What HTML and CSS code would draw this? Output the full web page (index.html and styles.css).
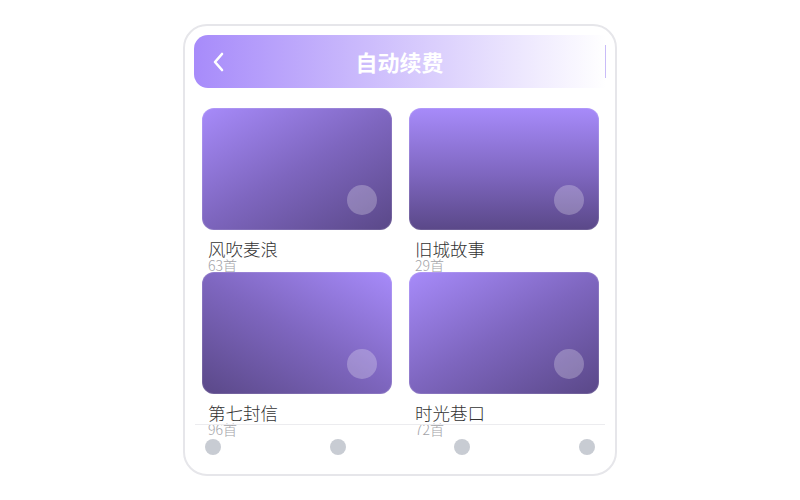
FILE: index.html
```html
<!DOCTYPE html>
<html lang="zh-CN">
<head>
    <meta charset="UTF-8">
    <meta name="viewport" content="width=device-width, initial-scale=1.0">
    <title>自动续费</title>
    <link rel="stylesheet" href="styles.css">
</head>
<body>
    <div class="phone">
        <div class="header">
            <span class="back">
                <svg width="14" height="20" viewBox="0 0 14 20"><path d="M10 2 L3 10 L10 18" fill="none" stroke="#fff" stroke-width="2.6" stroke-linecap="round" stroke-linejoin="round"/></svg>
            </span>
            <h1 class="title">自动续费</h1>
            <span class="edge"></span>
        </div>

        <div class="grid" id="albumGrid"></div>

        <div class="tabbar">
            <span class="dot"></span>
            <span class="dot"></span>
            <span class="dot"></span>
            <span class="dot"></span>
        </div>
    </div>

    <script>
        const albums = [
            { name: "风吹麦浪", count: 63, style: "g1" },
            { name: "旧城故事", count: 29, style: "g2" },
            { name: "第七封信", count: 96, style: "g3" },
            { name: "时光巷口", count: 72, style: "g1" }
        ];

        const grid = document.getElementById("albumGrid");
        albums.forEach(album => {
            const item = document.createElement("div");
            item.className = "album";
            item.innerHTML = `
                <div class="cover ${album.style}"><span class="play"></span></div>
                <div class="name">${album.name}</div>
                <div class="count">${album.count}首</div>
            `;
            grid.appendChild(item);
        });
    </script>
</body>
</html>
```

FILE: styles.css
```css
body {
    margin: 0;
    background: #fff;
    font-family: "Noto Sans CJK SC", "Noto Sans", sans-serif;
}
.phone {
    position: relative;
    width: 430px;
    height: 448px;
    margin: 24px auto 0;
    border: 2px solid #e6e6ea;
    border-radius: 24px;
    overflow: hidden;
    background: #fff;
}
.header {
    display: flex;
    align-items: center;
    height: 53px;
    margin: 9px 9px 0 9px;
    border-radius: 14px 0 0 14px;
    background: linear-gradient(90deg, #a78bfa 0%, #ffffff 100%);
}
.back {
    display: flex;
    width: 14px;
    height: 20px;
    margin-left: 18px;
}
.title {
    flex: 1;
    margin: 0 32px 0 0;
    text-align: center;
    color: #fff;
    font-size: 22px;
    font-weight: 700;
    line-height: 53px;
}
.edge {
    width: 1px;
    height: 33px;
    background: #c9bcf8;
}
.grid {
    display: grid;
    grid-template-columns: 190px 190px;
    grid-auto-rows: 164px;
    column-gap: 17px;
    padding: 20px 16px 0 17px;
}
.album {
    display: flex;
    flex-direction: column;
}
.cover {
    position: relative;
    height: 122px;
    border-radius: 12px;
    box-shadow: inset 0 0 0 1px rgba(255, 255, 255, 0.12);
}
.g1 {
    background: linear-gradient(150deg, #a78bfa 0%, #7e66bf 50%, #5a4888 100%);
}
.g2 {
    background: linear-gradient(180deg, #a78bfa 0%, #7e66bf 55%, #5a4888 100%);
}
.g3 {
    background: linear-gradient(30deg, #5a4888 0%, #7e66bf 50%, #a78bfa 100%);
}
.play {
    position: absolute;
    right: 15px;
    bottom: 15px;
    width: 30px;
    height: 30px;
    border-radius: 50%;
    background: rgba(255, 255, 255, 0.25);
}
.name {
    margin-top: 9px;
    padding-left: 6px;
    font-size: 17.5px;
    font-weight: 300;
    line-height: 20px;
    color: #333;
}
.count {
    padding-left: 6px;
    font-size: 14px;
    font-weight: 300;
    line-height: 13px;
    color: #a3a3a8;
}
.tabbar {
    position: absolute;
    left: 10px;
    right: 10px;
    bottom: 0;
    box-sizing: border-box;
    height: 50px;
    border-top: 1px solid #ececef;
    display: flex;
    justify-content: space-between;
    align-items: center;
    padding: 0 10px 6px;
}
.dot {
    width: 16px;
    height: 16px;
    border-radius: 50%;
    background: #c8ccd3;
}
```
